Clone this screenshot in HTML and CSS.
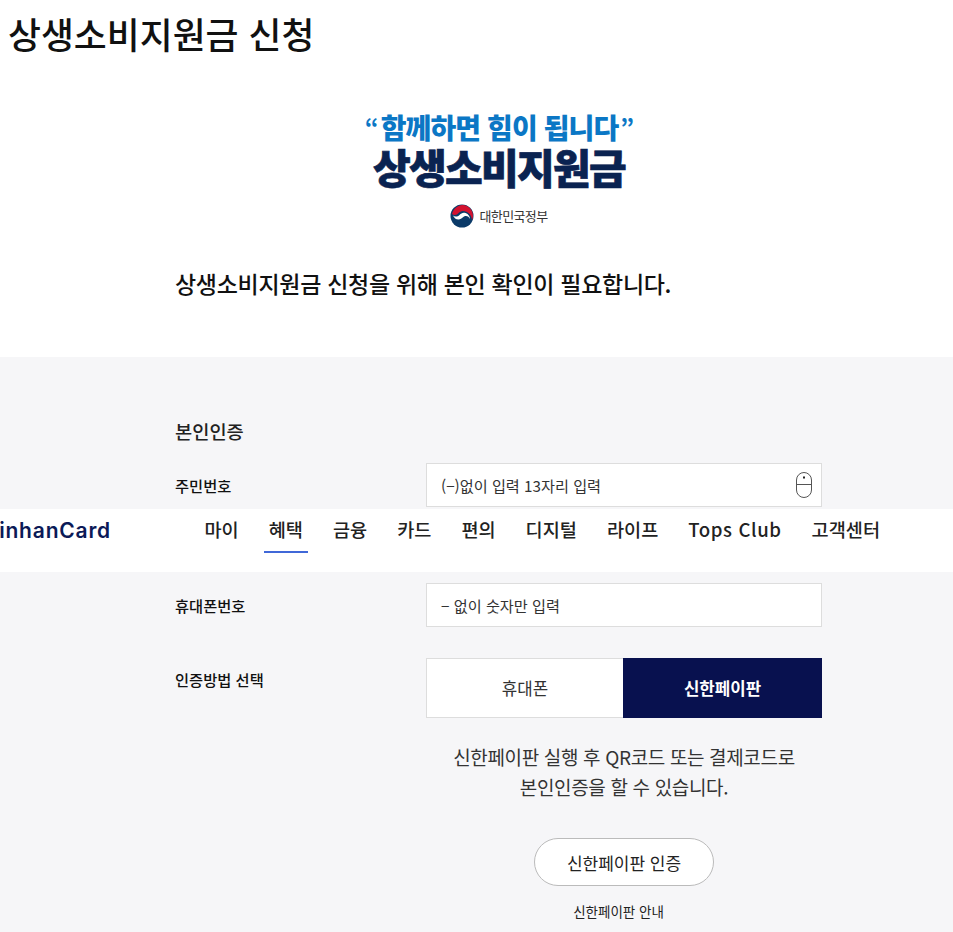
FILE: index.html
```html
<!DOCTYPE html>
<html lang="ko">
<head>
<meta charset="utf-8">
<title>상생소비지원금 신청</title>
<link rel="stylesheet" href="styles.css">
</head>
<body>
<h1 class="page-title">상생소비지원금 신청</h1>
<div class="logo">
  <p class="logo-slogan"><span class="quote quote-open">“</span>함께하면 힘이 됩니다<span class="quote quote-close">”</span></p>
  <p class="logo-name">상생소비지원금</p>
  <p class="logo-gov">
    <svg class="gov-mark" viewBox="0 0 24 24" width="24" height="24" aria-hidden="true">
      <circle cx="12" cy="12" r="11.500" fill="#0b3a68"/>
      <path d="M2 10C3.500 4.500 8 1 12.500 1 18.500 1 23 6 23 12c0 1.500-.3 2.800-1 4-.5-5.500-4.500-9-9-9-4 0-5 4-8 4-1.200 0-2.200-.3-3-1z" fill="#d3122f"/>
      <path d="M3 11.500c1.500 1.500 4.500 1.500 6.500-.5 1.500-1.500 3-2.500 5-2.200 3 .4 5.500 3.200 5.500 6.200-1-2.500-3-3.500-5-3-2 .5-3 3-6 3.500-2.500.4-5-1.500-6-4z" fill="#fff"/>
    </svg>
    <span>대한민국정부</span>
  </p>
</div>
<p class="intro">상생소비지원금 신청을 위해 본인 확인이 필요합니다.</p>
<main class="panel">
  <div class="form">
    <h2 class="form-title">본인인증</h2>
    <div class="row row-id">
      <span class="label">주민번호</span>
      <div class="field">
        <span class="placeholder">(−)없이 입력 13자리 입력</span>
        <svg class="mouse" viewBox="0 0 16 26" width="16" height="26" aria-hidden="true">
          <rect x="0.500" y="0.500" width="15" height="25" rx="7.500" fill="none" stroke="#555" stroke-width="1"/>
          <path d="M.5 12.500h15" stroke="#555" stroke-width="1"/>
          <path d="M8 4.500v2" stroke="#222" stroke-width="2"/>
        </svg>
      </div>
    </div>
    <div class="row row-phone">
      <span class="label">휴대폰번호</span>
      <div class="field"><span class="placeholder">− 없이 숫자만 입력</span></div>
    </div>
    <div class="row row-method">
      <span class="label label-method">인증방법 선택</span>
      <div class="tabs">
        <button class="tab" type="button">휴대폰</button>
        <button class="tab tab-on" type="button">신한페이판</button>
      </div>
    </div>
    <div class="method-body">
      <p class="method-text">신한페이판 실행 후 QR코드 또는 결제코드로<br>본인인증을 할 수 있습니다.</p>
      <button class="pill" type="button">신한페이판 인증</button>
      <a class="guide" href="#">신한페이판 안내</a>
    </div>
  </div>
</main>
<nav class="gnb">
  <span class="brand">ShinhanCard</span>
  <ul class="menu">
    <li>마이</li>
    <li class="on">혜택</li>
    <li>금융</li>
    <li>카드</li>
    <li>편의</li>
    <li>디지털</li>
    <li>라이프</li>
    <li class="tops">Tops Club</li>
    <li>고객센터</li>
  </ul>
</nav>
</body>
</html>
```
FILE: styles.css
```css
* { box-sizing: border-box; }
html, body { margin: 0; padding: 0; }
body {
  position: relative;
  height: 932px;
  overflow: hidden;
  background: #fff;
  color: #111;
  font-family: "Noto Sans CJK KR", "Noto Sans", sans-serif;
}
p, h1, h2, ul { margin: 0; padding: 0; }
.page-title {
  padding: 7px 0 0 8px;
  height: 60px;
  font-size: 35.800px;
  line-height: 52px;
  font-weight: 500;
  color: #111;
}
.logo {
  margin-top: 50px;
  margin-left: 45px;
  display: flex;
  flex-direction: column;
  align-items: center;
}
.logo-slogan {
  font-size: 28px;
  line-height: 34px;
  font-weight: 900;
  color: #0b77c5;
  letter-spacing: -0.9px;
  white-space: nowrap;
}
.quote { font-size: 24px; font-weight: 700; }
.quote-open { margin-right: 3px; }
.quote-close { margin-left: 2px; }
.logo-name {
  font-size: 41px;
  line-height: 40px;
  font-weight: 900;
  color: #0a2351;
  letter-spacing: -1.700px;
  -webkit-text-stroke: 0.7px #0a2351;
}
.logo-gov {
  margin-top: 18px;
  display: flex;
  align-items: center;
  gap: 5px;
  font-size: 13px;
  line-height: 24px;
  color: #333;
  letter-spacing: -0.6px;
}
.intro {
  margin-top: 39px;
  padding-left: 175px;
  font-size: 23px;
  line-height: 32px;
  font-weight: 500;
  letter-spacing: -0.3px;
}
.panel {
  margin-top: 58px;
  height: 575px;
  background: #f6f6f8;
  padding-left: 175px;
}
.form { width: 647px; padding-top: 58px; }
.form-title {
  font-size: 18.700px;
  line-height: 32px;
  font-weight: 500;
  color: #222;
}
.row { display: flex; }
.row-id { margin-top: 16px; }
.row-phone { margin-top: 76px; }
.row-method { margin-top: 31px; }
.label {
  width: 251px;
  flex: none;
  font-size: 15.300px;
  line-height: 44px;
  font-weight: 500;
  color: #111;
}
.label-method { line-height: 42px; }
.field {
  flex: 1;
  height: 44px;
  display: flex;
  align-items: center;
  justify-content: space-between;
  padding: 0 9px 0 14px;
  background: #fff;
  border: 1px solid #ddd;
}
.placeholder { font-size: 15.200px; color: #333; }
.mouse { display: block; }
.tabs {
  flex: 1;
  display: grid;
  grid-template-columns: 197px 199px;
  height: 60px;
}
.tab {
  border: 1px solid #ddd;
  border-right: 0;
  background: #fff;
  font: inherit;
  font-size: 16.800px;
  color: #333;
  padding: 0;
}
.tab-on {
  background: #08114f;
  border: 0;
  color: #fff;
  font-weight: 700;
}
.method-body {
  padding-left: 251px;
  display: flex;
  flex-direction: column;
  align-items: center;
}
.method-text {
  margin-top: 24px;
  font-size: 19px;
  line-height: 30px;
  text-align: center;
  color: #333;
  letter-spacing: -0.35px;
}
.pill {
  margin-top: 36px;
  width: 180px;
  height: 48px;
  border: 1px solid #bbb;
  border-radius: 24px;
  background: #fff;
  font: inherit;
  font-size: 17px;
  color: #222;
  padding: 0;
}
.guide {
  margin-top: 14px;
  margin-right: 11px;
  font-size: 13.500px;
  line-height: 22px;
  color: #222;
  text-decoration: none;
}
.gnb {
  position: absolute;
  left: 0;
  top: 509px;
  width: 953px;
  height: 63px;
  background: #fff;
}
.brand {
  position: absolute;
  right: 842px;
  top: 7px;
  font-family: "Inter", "Noto Sans", sans-serif;
  font-size: 21px;
  line-height: 30px;
  font-weight: 600;
  color: #0b1a57;
  letter-spacing: 0.8px;
  white-space: nowrap;
}
.menu {
  position: absolute;
  left: 189.500px;
  top: -1px;
  display: flex;
  list-style: none;
}
.menu li {
  position: relative;
  padding: 0 15px;
  height: 44px;
  font-size: 18.600px;
  line-height: 41px;
  font-weight: 500;
  color: #222;
  white-space: nowrap;
}
.menu li.tops { letter-spacing: 0.6px; }
.menu li.on::after {
  content: "";
  position: absolute;
  left: 10px;
  right: 10px;
  top: 43px;
  height: 2px;
  background: #4068d8;
}
```
